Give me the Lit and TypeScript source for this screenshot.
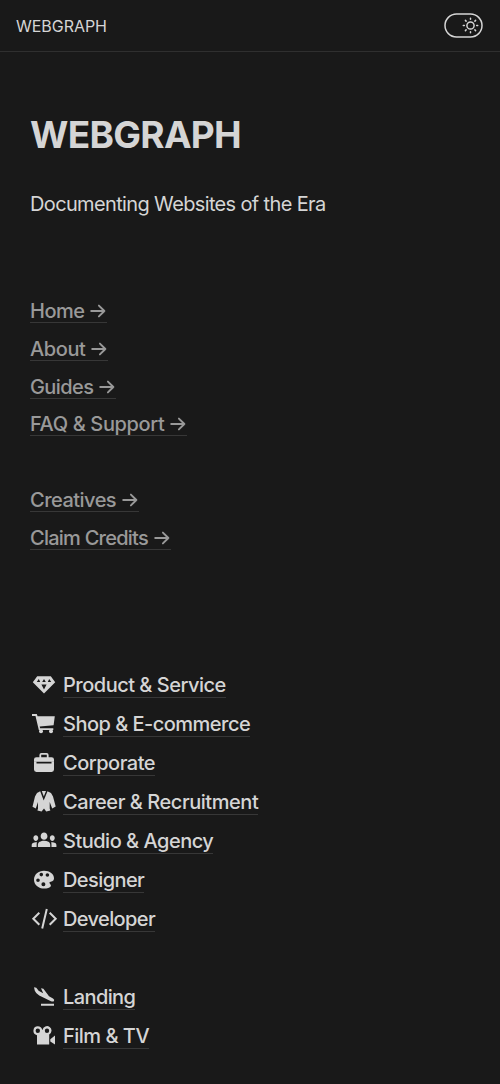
import { LitElement, html, svg, css } from "lit";
import { customElement } from "lit/decorators.js";
import { styleMap } from "lit/directives/style-map.js";

const icons: Record<string, unknown> = {
  gem: svg`<path fill-rule="evenodd" d="M6.2 3.2H19.8L24.2 9.2 13 20.4 1.8 9.2ZM7.8 6 5.8 9H9.2ZM13 6 11.2 9H14.8ZM18.2 6 16.8 9H20.2ZM10.4 11.4 13 16.4 15.6 11.4Z"/>`,
  cart: svg`<path d="M1 2H5.8L6.6 4.3H23.8L22.6 13.2 8.7 14.6 9.1 16.3H22.3V18H7.8L4.5 4H1Z"/><circle cx="10" cy="19.2" r="2"/><circle cx="20" cy="19.2" r="2"/>`,
  briefcase: svg`<path fill-rule="evenodd" d="M8.4 6.2V4Q8.4 2 10.4 2H15.6Q17.6 2 17.6 4V6.2H20.6Q23 6.2 23 8.6V10.8H3V8.6Q3 6.2 5.4 6.2ZM10.2 6.2H15.8V3.8H10.2ZM3 12.4H23V18.6Q23 21 20.6 21H5.4Q3 21 3 18.6Z"/><path d="M3 10.5H5.5V13H3ZM20.5 10.5H23V13H20.5Z"/>`,
  jacket: svg`<path d="M9.2 1.2 12.7 10.4 16.5 1.2 20 3 22 6.5 24.7 16.5 21.2 18.4 18.7 12V18.5L19.4 20.4 15.2 21.5 13 18.5 10.6 21.5 6.4 20.4 7 18.5V12L4.8 18.4 1.5 16.7 4 6.5 6 3Z"/><path d="M10.8 1H15L12.8 6.5Z"/>`,
  groups: svg`<g transform="translate(.7 -3.6) scale(1.03 1.2)"><path d="M12 12.75c1.63 0 3.07.39 4.24.9 1.08.48 1.76 1.56 1.76 2.73V18H6v-1.61c0-1.18.68-2.26 1.76-2.73 1.17-.52 2.61-.91 4.24-.91zM4 13c1.3 0 2.4-1.1 2.4-2.4s-1.1-2.4-2.4-2.4-2.4 1.1-2.4 2.4 1.1 2.4 2.4 2.4zm1.13 1.1c-.37-.06-.74-.1-1.13-.1-.99 0-1.93.21-2.78.58C.48 14.9 0 15.62 0 16.43V18h4.8v-1.61c0-.83.1-1.61.33-2.29zM20 13c1.3 0 2.4-1.1 2.4-2.4s-1.1-2.4-2.4-2.4-2.4 1.1-2.4 2.4 1.1 2.4 2.4 2.4zm4 3.43c0-.81-.48-1.53-1.22-1.85-.85-.37-1.79-.58-2.78-.58-.39 0-.76.04-1.13.1.23.68.33 1.46.33 2.29V18H24v-1.57zM12 6c1.8 0 3.3 1.34 3.3 3s-1.5 3-3.3 3-3.3-1.34-3.3-3 1.5-3 3.3-3z"/></g>`,
  palette: svg`<path fill-rule="evenodd" d="M13 2.8C18.8 2.8 23 6 23 10.2 23 13.6 19.8 13.3 18.6 14.2 17.6 15.2 20.6 16.6 19.8 18.2 19 19.8 16 20.6 13.2 20.6 7.4 20.6 3 16.8 3 11.8 3 6.6 7.4 2.8 13 2.8ZM10.3 4.8a1.8 1.8 0 1 0 0 3.6 1.8 1.8 0 0 0 0-3.6ZM16.4 5.2a1.8 1.8 0 1 0 0 3.6 1.8 1.8 0 0 0 0-3.6ZM7 10.4a1.8 1.8 0 1 0 0 3.6 1.8 1.8 0 0 0 0-3.6ZM12.4 14.2a2 2 0 1 0 0 4 2 2 0 0 0 0-4Z"/>`,
  code: svg`<path fill="none" stroke="currentColor" stroke-width="2" d="M8.3 5.8 2.3 11.8 8.3 17.8M18.7 5.8 24.7 11.8 18.7 17.8M15.8 2 11.2 21.5"/>`,
  landing: svg`<path d="M3 2.2 5.3 2.8 7.6 5.8 12.2 8.2 10 3.2 12.4 3.8 18 11.2 22 13.5Q23.8 14.8 23 16 22 17 20 16.2L8.2 10.6Q5 8.8 3.8 5.8ZM10 18.8H23V20.8H10Z"/>`,
  film: svg`<path fill-rule="evenodd" d="M6.8 2.3a4.5 4.5 0 0 1 4.4 3.5h.4a4.5 4.5 0 1 1 6.6 4.7V20.5H6V11.2A4.5 4.5 0 0 1 6.8 2.3ZM6.8 4.5a2.2 2.2 0 1 0 0 4.4 2.2 2.2 0 0 0 0-4.4ZM16 4.5a2.2 2.2 0 1 0 0 4.4 2.2 2.2 0 0 0 0-4.4ZM19.3 15.2 24 11.5V20.5L19.3 17.5Z"/>`,
};

interface Entry {
  label: string;
  tracking: number;
  icon?: string;
}

const pages: Entry[][] = [
  [
    { label: "Home", tracking: -0.5 },
    { label: "About", tracking: -0.4 },
    { label: "Guides", tracking: -0.6 },
    { label: "FAQ & Support", tracking: -0.36 },
  ],
  [
    { label: "Creatives", tracking: -0.52 },
    { label: "Claim Credits", tracking: -0.76 },
  ],
];

const categories: Entry[][] = [
  [
    { icon: "gem", label: "Product & Service", tracking: -0.5 },
    { icon: "cart", label: "Shop & E-commerce", tracking: -0.52 },
    { icon: "briefcase", label: "Corporate", tracking: -0.5 },
    { icon: "jacket", label: "Career & Recruitment", tracking: -0.45 },
    { icon: "groups", label: "Studio & Agency", tracking: -0.5 },
    { icon: "palette", label: "Designer", tracking: -0.58 },
    { icon: "code", label: "Developer", tracking: -0.62 },
  ],
  [
    { icon: "landing", label: "Landing", tracking: -0.6 },
    { icon: "film", label: "Film & TV", tracking: -0.5 },
  ],
];

const track = (e: Entry) => styleMap({ letterSpacing: `${e.tracking}px` });

@customElement("app-root")
export class AppRoot extends LitElement {
  static styles = css`
    :host { display: block; box-sizing: border-box; height: 1084px; overflow: hidden; background: #191919; color: #d5d5d5; font-family: Inter, "Liberation Sans", sans-serif; }
    .bar { box-sizing: border-box; height: 52px; padding: 0 17px 0 16px; display: flex; align-items: center; justify-content: space-between; border-bottom: 1px solid #2f2f2f; }
    .brand { font-size: 16px; letter-spacing: -0.04px; }
    .toggle { display: block; width: 39px; height: 25px; }
    main { padding: 58px 30px 0; }
    h1 { margin: 0; font-size: 37px; line-height: 50px; font-weight: 700; letter-spacing: -0.7px; }
    .tagline { margin: 30px 0 0; font-size: 20px; line-height: 29px; letter-spacing: -0.64px; }
    .pages { margin-top: 73.1px; display: grid; gap: 37.8px; color: #999; }
    .categories { margin-top: 108.4px; display: grid; gap: 39px; }
    .group { display: grid; justify-items: start; }
    .page { height: 37.8px; display: flex; align-items: center; }
    .category { height: 39px; display: flex; align-items: center; }
    .link { height: 23px; font-size: 20px; line-height: 25px; font-weight: 500; white-space: nowrap; border-bottom: 1px solid #373737; }
    .category .link { height: 24px; margin-top: 1px; }
    .icon { width: 27px; height: 24px; margin: 0 5px 0 1px; fill: currentColor; }
    .arrow { width: 17px; height: 14px; margin-left: 6px; vertical-align: 0; fill: none; stroke: currentColor; stroke-width: 1.9; stroke-linecap: round; stroke-linejoin: round; }
  `;

  render() {
    return html`
      <header class="bar">
        <span class="brand">WEBGRAPH</span>
        <svg class="toggle" viewBox="0 0 39 25" fill="none" stroke="#d5d5d5" stroke-width="1.5" stroke-linecap="round">
          <rect x="1" y="1" width="37" height="23" rx="11.5" />
          <circle cx="26.5" cy="12.5" r="3.6" />
          <path d="M26.5 5.3v1M26.5 18.7v1M19.3 12.5h1M32.7 12.5h1M21.4 7.4l.7.7M30.9 16.9l.7.7M21.4 17.6l.7-.7M30.9 8.1l.7-.7" />
        </svg>
      </header>
      <main>
        <h1>WEBGRAPH</h1>
        <p class="tagline">Documenting Websites of the Era</p>
        <nav class="pages">
          ${pages.map((g) => html`<div class="group">${g.map((e) => html`<div class="page"><a class="link" style=${track(e)}>${e.label}<svg class="arrow" viewBox="0 0 17 14"><path d="M1.2 7H14.4M8.9 1.6 14.4 7 8.9 12.4" /></svg></a></div>`)}</div>`)}
        </nav>
        <nav class="categories">
          ${categories.map((g) => html`<div class="group">${g.map((e) => html`<div class="category"><svg class="icon" viewBox="0 0 27 24">${icons[e.icon!]}</svg><a class="link" style=${track(e)}>${e.label}</a></div>`)}</div>`)}
        </nav>
      </main>
    `;
  }
}
